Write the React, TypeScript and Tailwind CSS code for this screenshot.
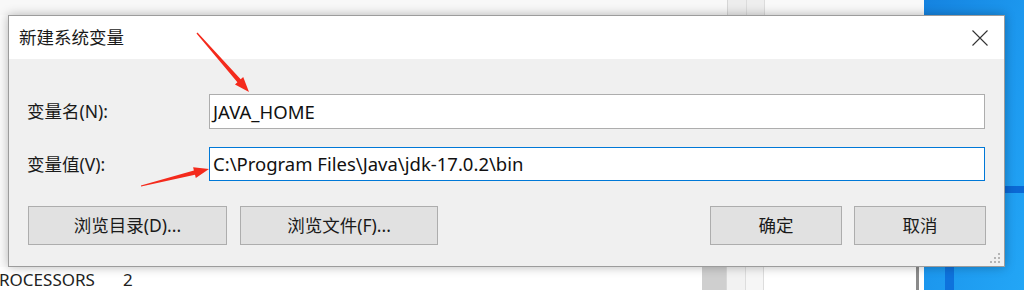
import React from "react";

const FONT = { fontFamily: '"Noto Sans", "Noto Sans CJK SC", sans-serif' };

function Arrow({ x0, y0, x1, y1 }: { x0: number; y0: number; x1: number; y1: number }) {
  const dx = x1 - x0;
  const dy = y1 - y0;
  const len = Math.hypot(dx, dy);
  const ux = dx / len;
  const uy = dy / len;
  const nx = -uy;
  const ny = ux;
  const headLen = 15;
  const bx = x1 - ux * headLen;
  const by = y1 - uy * headLen;
  const p = (x: number, y: number) => `${x.toFixed(1)},${y.toFixed(1)}`;
  const pts = [
    p(x0 + nx * 0.6, y0 + ny * 0.6),
    p(bx + nx * 2.2, by + ny * 2.2),
    p(bx + nx * 5.5, by + ny * 5.5),
    p(x1, y1),
    p(bx - nx * 5.5, by - ny * 5.5),
    p(bx - nx * 2.2, by - ny * 2.2),
    p(x0 - nx * 0.6, y0 - ny * 0.6),
  ].join(" ");
  return <polygon points={pts} fill="#f42a1c" />;
}

function Btn({ children, w }: { children: React.ReactNode; w: string }) {
  return (
    <div
      className={`${w} h-[39px] flex items-center justify-center bg-[#e1e1e1] border border-[#adadad] text-[17.5px] text-[#1a1a1a]`}
    >
      {children}
    </div>
  );
}

export default function App() {
  return (
    <div className="relative w-[1024px] h-[290px] overflow-hidden bg-white" style={FONT}>
      {/* desktop background */}
      <div className="absolute inset-0 flex">
        <div className="relative w-[924px] h-full bg-[#fbfbfb] flex flex-col">
          <div className="h-[15px] flex">
            <div className="w-[727px] bg-[#f8f8f8]" />
            <div className="w-[19px] bg-[#ededed] border-l border-[#d6d6d6]" />
            <div className="w-[19px] bg-[#eeeeee] border-l border-[#dcdcdc] border-r border-[#d0d0d0]" />
            <div className="flex-1 bg-[#f9f9f9]" />
          </div>
          <div className="flex-1" />
          <div className="h-[23px] flex">
            <div className="w-[702px] bg-white pt-[4px] text-[17px] leading-none text-[#222] flex">
              <span className="-ml-[1px]">ROCESSORS</span>
              <span className="ml-[28px]">2</span>
            </div>
            <div className="w-[24px] bg-[#cfcfcf]" />
            <div className="w-[19px] bg-[#f2f2f2] border-l border-[#d8d8d8]" />
            <div className="w-[19px] bg-[#f6f6f6] border-l border-[#dddddd] border-r border-[#cccccc]" />
            <div className="w-[152px] bg-white" />
            <div className="w-[3px] bg-[#8a8a8a]" />
            <div className="flex-1 bg-white" />
          </div>
        </div>
        <div className="relative flex-1 h-full bg-gradient-to-br from-[#1583e0] via-[#1c97ee] to-[#23a6f6] overflow-hidden">
          <div className="absolute left-0 right-0 top-[186px] h-[7px] bg-[#0b68d4]" />
          <div className="absolute left-[21px] w-[9px] top-[193px] bottom-0 bg-[#0e72dc]" />
        </div>
      </div>

      {/* dialog window */}
      <div className="absolute left-[8px] top-[15px] w-[997px] h-[252px] border border-[#9c9c9c] bg-[#f0f0f0] shadow-[0_0_10px_rgba(0,0,0,0.28)] flex flex-col">
        <div className="h-[43px] bg-white flex items-center justify-between pl-[10px] pr-[16px]">
          <span className="text-[17.5px] text-[#1a1a1a]">新建系统变量</span>
          <svg width="16" height="16" viewBox="0 0 16 16">
            <path d="M0.5 0.5 L15.5 15.5 M15.5 0.5 L0.5 15.5" stroke="#333" strokeWidth="1.1" />
          </svg>
        </div>
        <div className="flex-1 flex flex-col pt-[35px] pl-[18px] pr-[18px]">
          <div className="grid grid-cols-[182px_776px] gap-y-[18px] items-center">
            <div className="text-[17.5px] text-[#1a1a1a]">变量名(N):</div>
            <div className="h-[35px] bg-white border border-[#adadad] flex items-center pl-[3px] text-[18.5px] text-[#111]">
              JAVA_HOME
            </div>
            <div className="text-[17.5px] text-[#1a1a1a]">变量值(V):</div>
            <div className="h-[34px] bg-white border border-[#0078d7] flex items-center pl-[3px] text-[18.5px] text-[#111]">
              C:\Program Files\Java\jdk-17.0.2\bin
            </div>
          </div>
          <div className="flex items-center mt-[25px] pl-[1px]">
            <div className="flex gap-[13px]">
              <Btn w="w-[199px]">浏览目录(D)...</Btn>
              <Btn w="w-[198px]">浏览文件(F)...</Btn>
            </div>
            <div className="flex-1" />
            <div className="flex gap-[12px]">
              <Btn w="w-[132px]">确定</Btn>
              <Btn w="w-[132px]">取消</Btn>
            </div>
          </div>
        </div>
        {/* resize grip */}
        <svg className="absolute right-[3px] bottom-[2px]" width="11" height="11" viewBox="0 0 11 11">
          <rect x="8" y="0" width="2" height="2" fill="#b5b5b5" />
          <rect x="4" y="4" width="2" height="2" fill="#b5b5b5" />
          <rect x="8" y="4" width="2" height="2" fill="#b5b5b5" />
          <rect x="0" y="8" width="2" height="2" fill="#b5b5b5" />
          <rect x="4" y="8" width="2" height="2" fill="#b5b5b5" />
          <rect x="8" y="8" width="2" height="2" fill="#b5b5b5" />
        </svg>
      </div>

      {/* red annotation arrows */}
      <svg className="absolute inset-0 pointer-events-none" width="1024" height="290" viewBox="0 0 1024 290">
        <Arrow x0={197} y0={33} x1={249} y1={92} />
        <Arrow x0={141} y0={186} x1={209} y1={169} />
      </svg>
    </div>
  );
}
